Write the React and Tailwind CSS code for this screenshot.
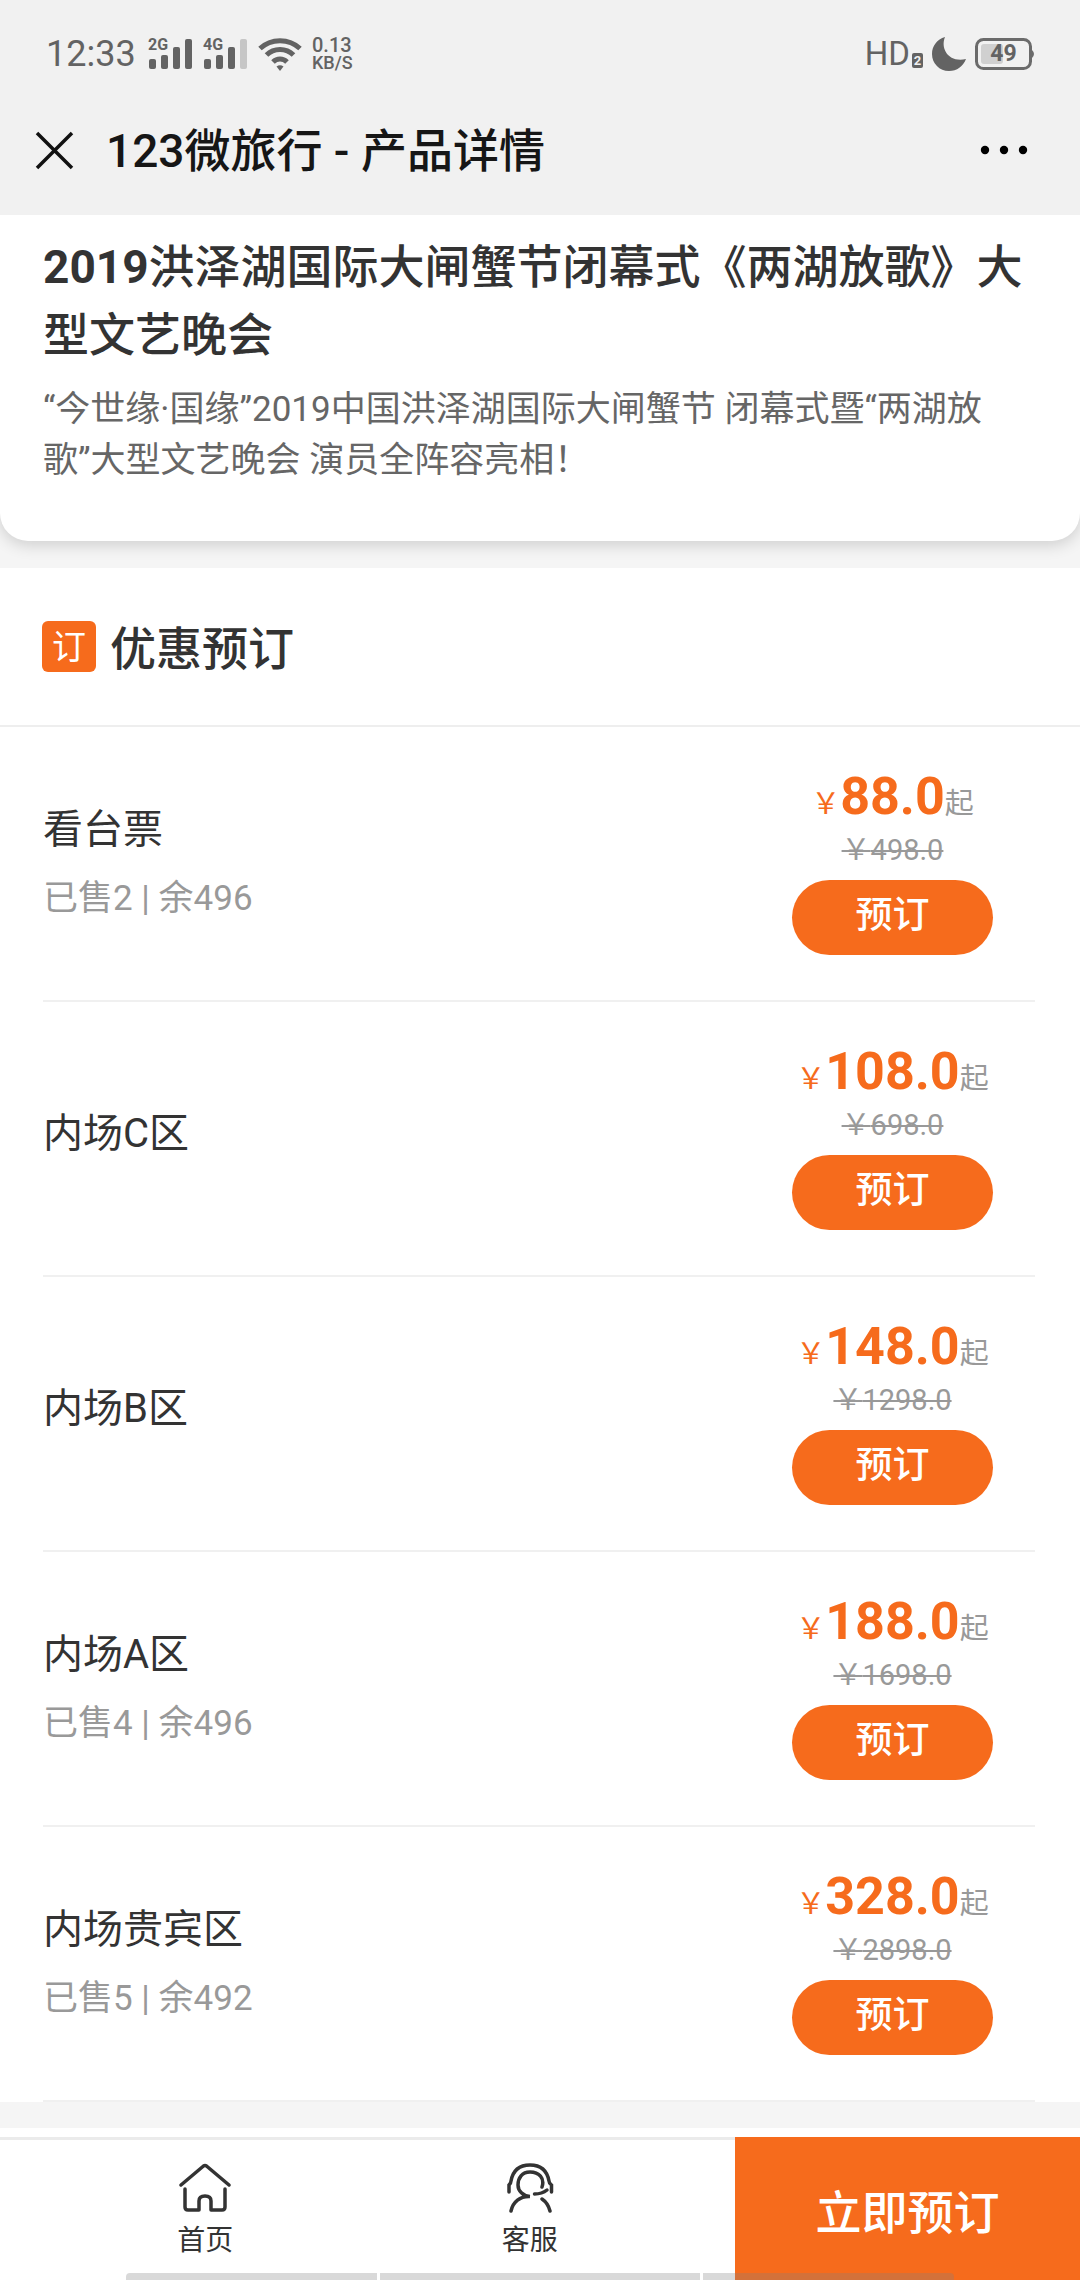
const tickets = [
  { name: '看台票', sold: 2, left: 496, price: '88.0', oldPrice: '498.0' },
  { name: '内场C区', price: '108.0', oldPrice: '698.0' },
  { name: '内场B区', price: '148.0', oldPrice: '1298.0' },
  { name: '内场A区', sold: 4, left: 496, price: '188.0', oldPrice: '1698.0' },
  { name: '内场贵宾区', sold: 5, left: 492, price: '328.0', oldPrice: '2898.0' },
];

function Signal({ label, weak }) {
  return (
    <div className="relative h-8 w-11">
      <span className="absolute -top-px left-0 text-[16px] leading-4 font-bold">{label}</span>
      <svg viewBox="0 0 44 32" className="h-8 w-11" fill="#636363">
        <rect x="1" y="21" width="7" height="10" rx="2" />
        <rect x="13" y="17" width="7" height="14" rx="2" />
        <rect x="25" y="9" width="7" height="22" rx="2" />
        <rect x="37" y="1" width="7" height="30" rx="2" fill={weak ? '#c6c6c6' : '#636363'} />
      </svg>
    </div>
  );
}

function StatusBar() {
  return (
    <div className="flex h-[108px] items-center justify-between pr-[44px] pl-[46px] text-[#636363]">
      <div className="flex items-center">
        <span className="w-[102px] text-[36px] leading-9">12:33</span>
        <div className="flex gap-[11px]">
          <Signal label="2G" />
          <Signal label="4G" weak />
        </div>
        <svg viewBox="0 0 44 34" className="ml-[11px] h-[34px] w-[44px]" fill="none" stroke="#636363" strokeWidth="5">
          <path d="M2 11.5 C13 1 31 1 42 11.5" />
          <path d="M8.5 18 C16 10.500 28 10.500 35.500 18" />
          <path d="M15 25 C19 21 25 21 29 25" />
          <path d="M18.500 29.500 Q22 27 25.500 29.500 L22 34 Z" fill="#636363" stroke="none" />
        </svg>
        <div className="ml-[10px] font-medium">
          <div className="text-[20px] leading-[18px]">0.13</div>
          <div className="text-[18px] leading-[18px]">KB/S</div>
        </div>
      </div>
      <div className="flex items-center">
        <span className="text-[33px] leading-9">HD</span>
        <span className="mt-3 ml-0.5 h-[15px] w-[11px] rounded-xs bg-[#636363] text-center text-[13px] leading-[15px] font-bold text-[#f1f1f1]">
          2
        </span>
        <svg viewBox="0 0 34 34" className="ml-[9px] h-[34px] w-[34px]" fill="#636363">
          <path d="M13 0 C8 12 17 26 34 22 C31 29.500 25 34 17 34 C7.500 34 0 26.500 0 17 C0 9 5 2.500 13 0 Z" />
        </svg>
        <div className="relative ml-[9px] flex h-8 w-[61px] items-center">
          <svg viewBox="0 0 61 32" className="absolute inset-0 h-8 w-[61px]">
            <rect x="6" y="6" width="22" height="20" rx="3" fill="#d0d0d0" />
            <rect x="1.500" y="1.500" width="54" height="29" rx="7" fill="none" stroke="#6b6b6b" strokeWidth="3" />
            <path d="M57 12 Q61 16 57 20 Z" fill="#6b6b6b" />
          </svg>
          <span className="relative w-[57px] text-center text-[23px] leading-8 font-bold">49</span>
        </div>
      </div>
    </div>
  );
}

function TitleBar() {
  return (
    <div className="flex h-[107px] items-center pr-[52px] pb-[23px] pl-[35px]">
      <button type="button" aria-label="关闭" className="h-[39px] w-[39px]">
        <svg viewBox="0 0 39 39" className="h-[39px] w-[39px]" stroke="#111" strokeWidth="3.500">
          <path d="M2 2 L37 37 M37 2 L2 37" />
        </svg>
      </button>
      <h1 className="ml-8 pt-0.5 text-[46px] leading-[60px] font-medium text-[#161616]">123微旅行 - 产品详情</h1>
      <button type="button" aria-label="更多" className="ml-auto">
        <svg viewBox="0 0 48 10" className="h-[10px] w-12" fill="#000">
          <circle cx="5" cy="5" r="4.200" />
          <circle cx="24" cy="5" r="4.200" />
          <circle cx="43" cy="5" r="4.200" />
        </svg>
      </button>
    </div>
  );
}

function Ticket({ ticket }) {
  return (
    <li className="flex h-[275px] items-center justify-between border-b-2 border-[#f0f0f0] pr-[42px]">
      <div>
        <h3 className="text-[40px] leading-[60px] text-[#333]">{ticket.name}</h3>
        <p className="mt-[10px] text-[35px] leading-[58px] text-[#999]">
          {ticket.sold && `已售${ticket.sold} | 余${ticket.left}`}
        </p>
      </div>
      <div className="flex w-[201px] flex-col items-center">
        <div className="flex h-[50px] items-baseline text-[29px] leading-[50px] whitespace-nowrap">
          <span className="text-[#f66b1c]">￥</span>
          <span className="text-[52px] font-bold text-[#f66b1c]">{ticket.price}</span>
          <span className="text-[#999]">起</span>
        </div>
        <del className="text-[29px] leading-[56px] text-[#999]">￥{ticket.oldPrice}</del>
        <button
          type="button"
          className="mt-0.5 h-[75px] w-full rounded-full bg-[#f66b1c] pb-1 text-[37px] leading-[56px] font-medium text-white"
        >
          预订
        </button>
      </div>
    </li>
  );
}

function HomeIcon() {
  return (
    <svg viewBox="0 0 52 50" className="h-[50px] w-[52px]" fill="none" stroke="#333" strokeWidth="3.500" strokeLinecap="round" strokeLinejoin="round">
      <path d="M2 22 L24.500 3 Q26 2 27.500 3 L50 22" />
      <path d="M6 26 V44 Q6 47 9 47 H20 V38 Q20 33 26 33 Q32 33 32 38 V47 H43 Q46 47 46 44 V26" />
    </svg>
  );
}

function ServiceIcon() {
  return (
    <svg viewBox="0 0 48 50" className="h-[50px] w-12" fill="none" stroke="#333" strokeWidth="3.500" strokeLinecap="round">
      <path d="M3 29 V22 Q5 20 5 18 C7 7 14 2 24 2 C34 2 41 7 43 18 Q43 20 45.500 22 V29" />
      <path d="M36 24 C39 15 33 9 24 9 C16 9 12 15 12 22 C12 28 17 33 24 33.500 C14 33 7 39 5 48" />
      <path d="M28.500 31 Q36 31 41 27" />
      <path d="M36 36 Q42 40 44 48" />
    </svg>
  );
}

function BottomBar() {
  return (
    <footer className="sticky bottom-0 flex h-[143px] bg-white">
      <nav className="flex flex-1 border-t-3 border-[#ebebeb] px-[43px]">
        <a href="#home" className="flex flex-1 flex-col items-center pt-[23px] text-[28px] leading-9 text-[#333]">
          <HomeIcon />
          <span className="mt-[10px]">首页</span>
        </a>
        <a href="#service" className="flex flex-1 flex-col items-center pt-[23px] text-[28px] leading-9 text-[#333]">
          <ServiceIcon />
          <span className="mt-[10px]">客服</span>
        </a>
      </nav>
      <button type="button" className="w-[345px] bg-[#f66b1c] pt-[10px] text-[46px] font-medium text-white">
        立即预订
      </button>
      {/* system gesture hints */}
      <div className="absolute inset-x-[126px] bottom-0 flex h-[7px] gap-[3px]">
        <div className="flex-[251] rounded-tl-sm bg-[#808080]/30" />
        <div className="flex-[320] bg-[#808080]/30" />
        <div className="flex-[251] rounded-tr-sm bg-[#808080]/30" />
      </div>
    </footer>
  );
}

export default function App() {
  return (
    <div className="flex min-h-screen flex-col bg-white font-['Roboto','Noto_Sans_CJK_SC',sans-serif]" lang="zh-CN">
      <header className="bg-[#f1f1f1]">
        <StatusBar />
        <TitleBar />
      </header>

      <main className="flex-1">
        <div className="overflow-hidden bg-[#f5f5f5] pb-[27px]">
          <section className="rounded-b-[28px] bg-white px-[43px] pt-[18px] pb-[55px] shadow-[0_4px_16px_rgba(0,0,0,0.16)]">
            <h2 className="text-[46px] leading-[68px] font-bold text-[#333]">
              2019<span className="font-medium">洪泽湖国际大闸蟹节闭幕式《两湖放歌》大型文艺晚会</span>
            </h2>
            <p className="mt-[15px] pr-12 text-[35px] leading-[51px] text-[#666]">
              “今世缘·国缘”2019中国洪泽湖国际大闸蟹节 闭幕式暨“两湖放歌”大型文艺晚会 演员全阵容亮相！
            </p>
          </section>
        </div>

        <section>
          <div className="flex h-[159px] items-center gap-[14px] border-b-2 border-[#eee] px-[42px]">
            <span className="flex h-[51px] w-[54px] items-center justify-center rounded-md bg-[#f66b1c] text-[34px] leading-10 text-white">
              订
            </span>
            <h2 className="pt-1 text-[46px] leading-[60px] font-medium text-[#333]">优惠预订</h2>
          </div>
          <ul className="pr-[45px] pl-[43px]">
            {tickets.map((ticket) => (
              <Ticket key={ticket.name} ticket={ticket} />
            ))}
          </ul>
        </section>
        <div className="h-[26px] bg-[#f5f5f5]" />
      </main>

      <BottomBar />
    </div>
  );
}
